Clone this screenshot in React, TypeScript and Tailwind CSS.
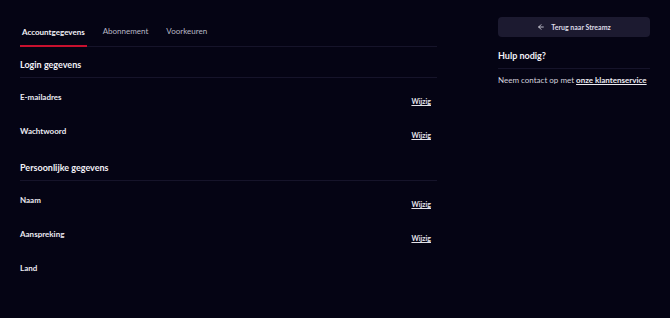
import React from "react";

const font = { fontFamily: "Lato, 'Noto Sans', sans-serif" };

function Row({ label, edit = true }: { label: string; edit?: boolean }) {
  return (
    <div className="flex h-[34px] items-start justify-between">
      <div className="mt-[14px] text-[8px] leading-[10px] font-bold text-[#ecebf2]">{label}</div>
      {edit && (
        <a className="mt-[18px] mr-[6px] text-[7px] leading-[10px] font-bold text-[#e4e3ea] underline">Wijzig</a>
      )}
    </div>
  );
}

function SectionHeader({ title, pt }: { title: string; pt: string }) {
  return (
    <div className={`${pt} pb-[7px] border-b border-[#16142a]`}>
      <div className="text-[9px] leading-[11px] font-bold text-[#f2f1f7]">{title}</div>
    </div>
  );
}

export default function App() {
  return (
    <div className="min-h-[318px] w-[670px] bg-[#050414] flex pl-[20px]" style={font}>
      <div className="w-[417px]">
        <div className="flex h-[47px] items-end gap-[14px] border-b border-[#16142a]">
          <div className="-mb-px border-b-2 border-[#c8102e] px-[2px] pb-[8px] text-[8px] leading-[10px] font-bold text-[#f2f1f7]">
            Accountgegevens
          </div>
          <div className="px-[2px] pb-[10px] text-[8px] leading-[10px] text-[#b9b8c6]">Abonnement</div>
          <div className="px-[2px] pb-[10px] text-[8px] leading-[10px] text-[#b9b8c6]">Voorkeuren</div>
        </div>
        <SectionHeader title="Login gegevens" pt="pt-[12px]" />
        <Row label="E-mailadres" />
        <Row label="Wachtwoord" />
        <SectionHeader title="Persoonlijke gegevens" pt="pt-[16px]" />
        <Row label="Naam" />
        <Row label="Aanspreking" />
        <Row label="Land" edit={false} />
      </div>
      <div className="ml-[61px] w-[152px] pt-[17px]">
        <button className="flex h-[20px] w-full items-center justify-center gap-[6px] rounded-[4px] bg-[#1c1a30] text-[7px] font-bold text-[#dcdbe6]">
          <svg width="8" height="8" viewBox="0 0 24 24" fill="none" stroke="currentColor" strokeWidth="2.5" strokeLinecap="round" strokeLinejoin="round">
            <path d="M19 12H5" />
            <path d="M12 19l-7-7 7-7" />
          </svg>
          <span>Terug naar Streamz</span>
        </button>
        <div className="pt-[13px] pb-[7px] border-b border-[#16142a] text-[9px] leading-[11px] font-bold text-[#f2f1f7]">
          Hulp nodig?
        </div>
        <div className="pt-[6px] text-[8px] leading-[10px] text-[#d4d3de] whitespace-nowrap">
          Neem contact op met <a className="font-bold underline text-[#ecebf2]">onze klantenservice</a>
        </div>
      </div>
    </div>
  );
}
